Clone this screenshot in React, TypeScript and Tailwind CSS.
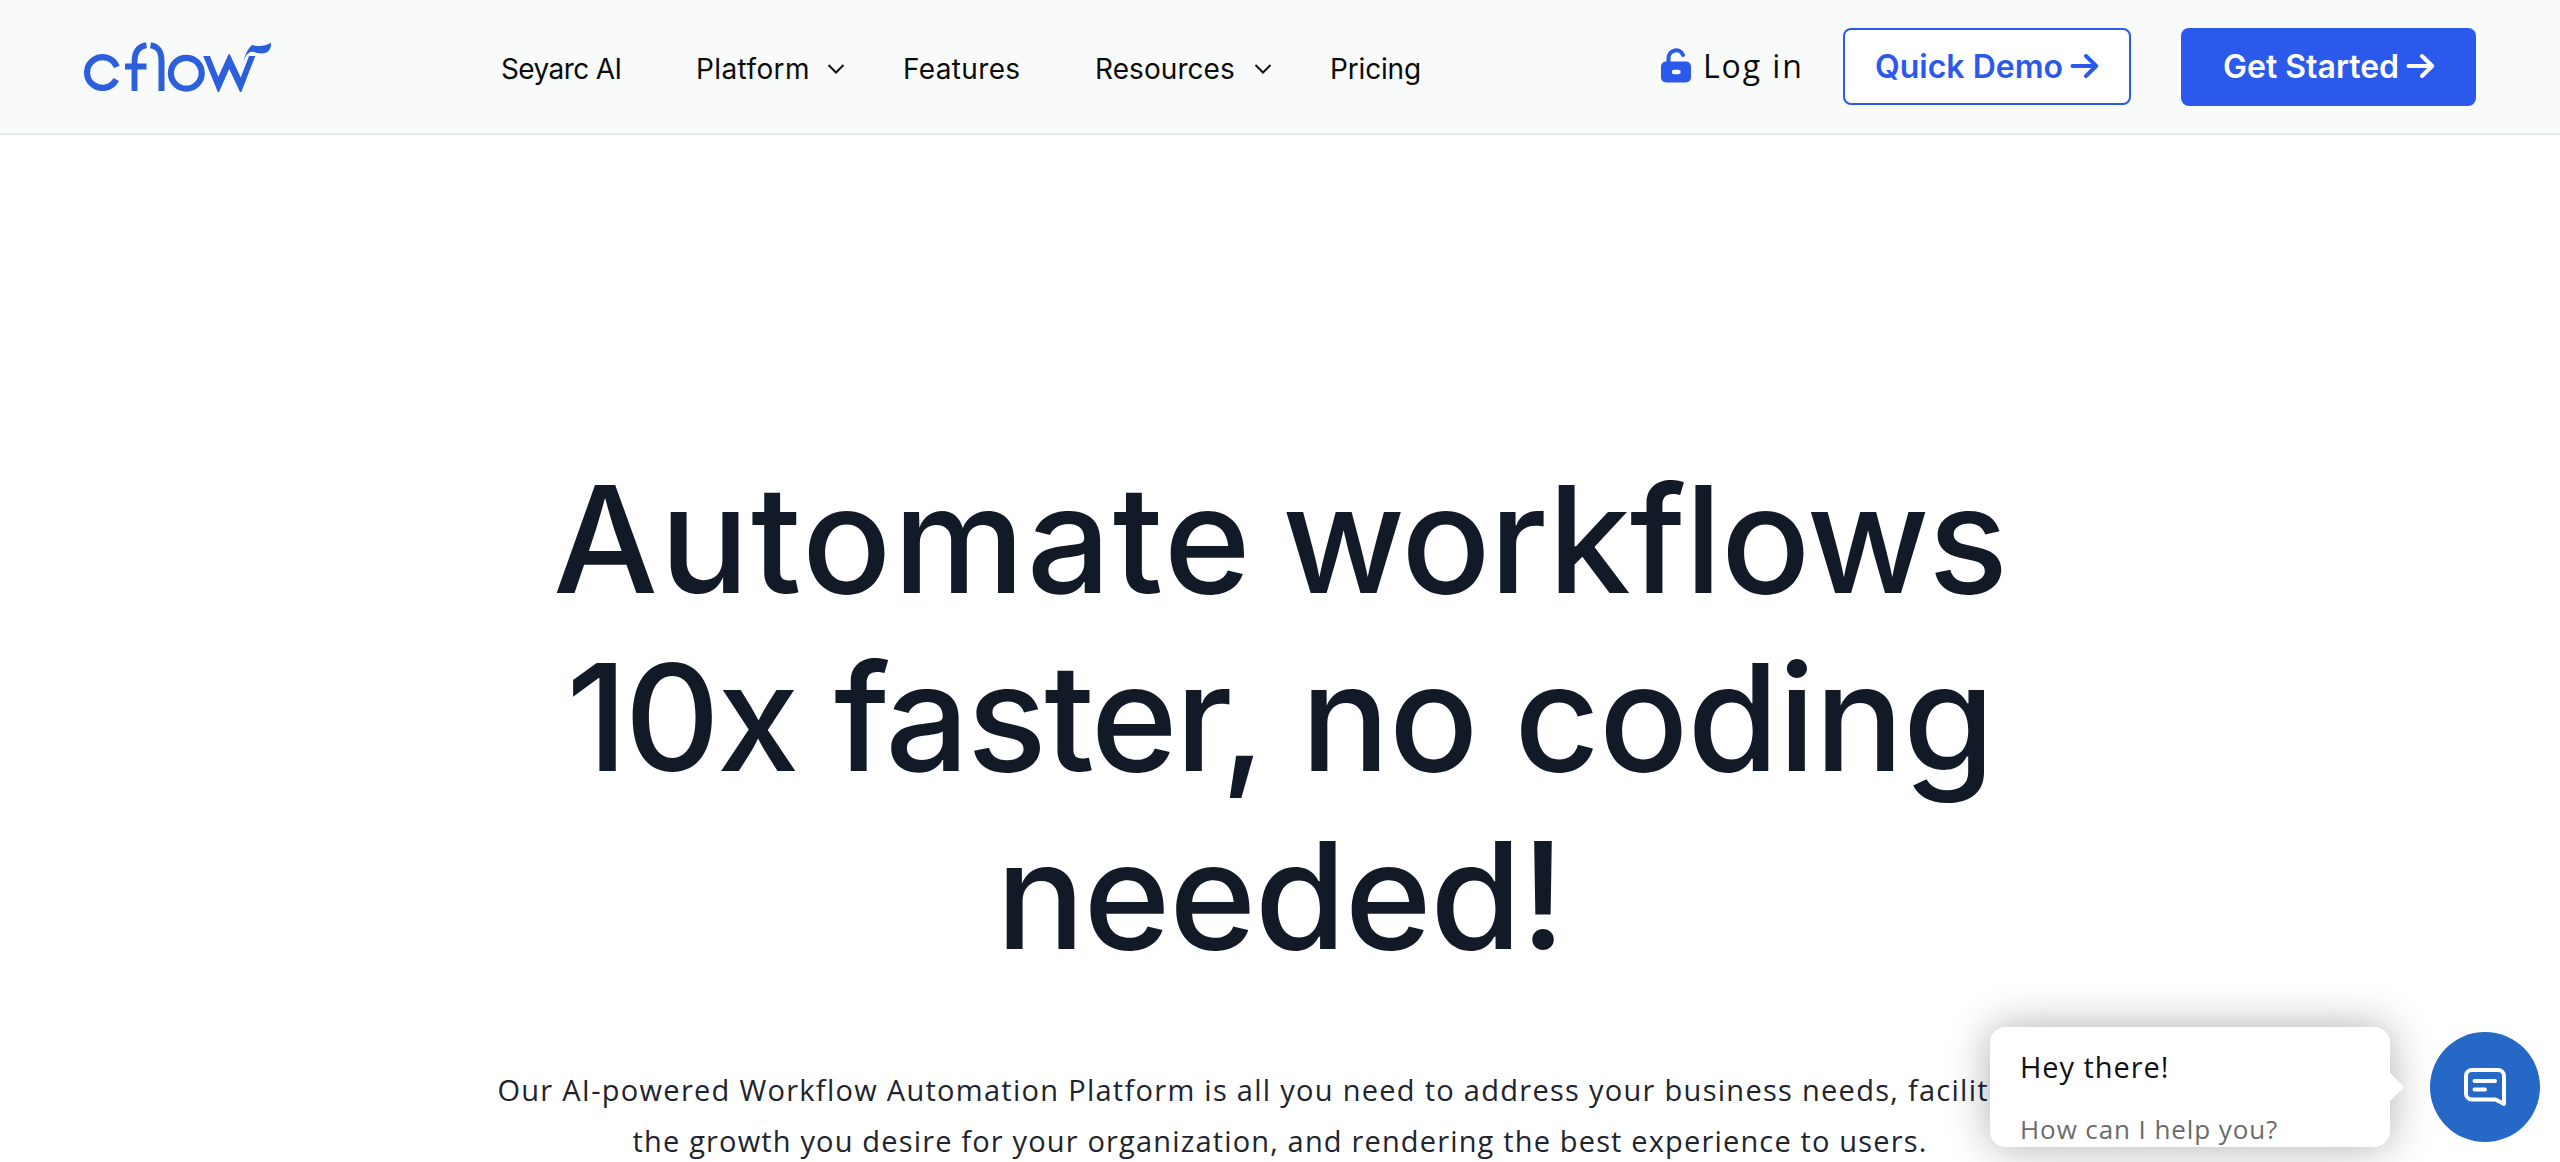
import type { ReactNode } from "react";

function Logo() {
  return (
    <svg width="190" height="52" viewBox="0 0 190 52" fill="none" stroke="#2b5fdc" strokeWidth="6.2" className="block shrink-0">
      <path d="M33.8 24.6A15.4 15.4 0 1 0 33.2 37.2" transform="translate(-1 .3)" />
      <path d="M50.5 49V19.5C50.5 9.5 54.5 4.500 62.500 3.200M41 24.500H62.500" strokeWidth="5.800" />
      <path d="M66.500 3.200C74.500 4.500 77.500 9.500 77.500 19.500V49" strokeWidth="6" />
      <circle cx="102.3" cy="31.2" r="15.400" />
      <path d="M119.200 14H126L134.300 34.800L144.600 12.300H145.800L156.700 35.500L165 14H171.300L157.300 50H156L145.200 27L135 50H133.800Z" fill="#2b5fdc" stroke="none" />
      <path d="M159.500 19.500C161 12.500 164 6.500 168 3C175 5 181 4 187 .8C187.500 7 184 11.500 178 11.500C172 11.300 169.500 8.700 166 10.300C163 11.500 161 15 159.500 19.500Z" fill="#2b5fdc" stroke="none" />
    </svg>
  );
}

function Chevron() {
  return (
    <svg width="18" height="12" viewBox="0 0 18 12" fill="none" stroke="#111" strokeWidth="2" className="mr-[58px] ml-auto">
      <path d="M1.500 2L9 9.500L16.500 2" />
    </svg>
  );
}

function Arrow() {
  return (
    <svg width="29" height="26" viewBox="0 0 29 26" fill="none" stroke="currentColor" strokeWidth="4" strokeLinecap="round" strokeLinejoin="round" className="shrink-0">
      <path d="M2.500 13H26M16 3L26.200 13L16 23" />
    </svg>
  );
}

function LockOpen() {
  return (
    <svg width="30" height="35" viewBox="0 0 30 35" fill="none" className="block shrink-0">
      <path d="M7.500 15V10.500C7.500 1.200 19 -.500 22 7" stroke="#2b59ec" strokeWidth="4" strokeLinecap="round" />
      <path fillRule="evenodd" d="M5 13.500H25A5 5 0 0 1 30 18.500V29.500A5 5 0 0 1 25 34.500H5A5 5 0 0 1 0 29.500V18.500A5 5 0 0 1 5 13.500ZM13 21.800A2.200 2.200 0 0 0 13 26.200H17.500A2.200 2.200 0 0 0 17.500 21.800Z" fill="#2b59ec" />
    </svg>
  );
}

function NavItem({ className, children, menu }: { className: string; children: ReactNode; menu?: boolean }) {
  return (
    <a className={`flex items-center whitespace-nowrap ${className}`}>
      {children}
      {menu && <Chevron />}
    </a>
  );
}

export default function App() {
  return (
    <div className="relative h-[1162px] w-[2560px] overflow-hidden bg-white font-['Open_Sans',sans-serif]">
      <header className="flex h-[135px] items-center border-b-2 border-[#e7e8ee] bg-[#f9fbfb] pr-[84px] pl-[84px]">
        <div className="mt-[3px] w-[417px]">
          <Logo />
        </div>
        <nav className="flex pt-[5px] font-['Inter',sans-serif] text-[28px] leading-[40px] text-[#0b0b0b]">
          <NavItem className="w-[195px] tracking-[-0.6px]">Seyarc AI</NavItem>
          <NavItem className="w-[207px] tracking-[0.4px]" menu>Platform</NavItem>
          <NavItem className="w-[192px] tracking-[0.35px]">Features</NavItem>
          <NavItem className="w-[235px] tracking-[0.07px]" menu>Resources</NavItem>
          <NavItem className="tracking-[-0.16px]">Pricing</NavItem>
        </nav>
        <div className="ml-auto flex h-[78px] items-start">
          <a className="flex h-[77px] w-[182px] items-center gap-[12px] text-[32px] whitespace-nowrap text-[#0b0b0b]">
            <div className="-mt-[2px]">
              <LockOpen />
            </div>
            <span className="tracking-[1.900px]">Log in</span>
          </a>
          <button className="flex h-[77px] w-[288px] items-center gap-[7px] rounded-lg border-2 border-[#2b59ec] bg-white pl-[30px] font-['Inter',sans-serif] text-[32px] font-semibold whitespace-nowrap text-[#2b59ec]">
            <span className="pt-[2px]">Quick Demo</span>
            <Arrow />
          </button>
          <button className="ml-[50px] flex h-[78px] w-[295px] items-center gap-[7px] rounded-lg bg-[#2b59ec] pb-px pl-[42px] font-['Inter',sans-serif] text-[32px] font-semibold whitespace-nowrap text-white">
            <span className="pt-[2px]">Get Started</span>
            <Arrow />
          </button>
        </div>
      </header>

      <main className="flex flex-col items-center text-center whitespace-nowrap">
        <h1 className="mt-[316px] flex flex-col items-center font-['Inter',sans-serif] text-[148px] leading-[178px] font-medium text-[#121a28]">
          <span className="[word-spacing:-10px]">
            <span className="tracking-[2px]">Automate</span> <span className="tracking-[-1.100px]">workflows</span>
          </span>
          <span className="[word-spacing:-2px]">
            <span className="tracking-[-3px]">10x</span> <span className="tracking-[-2.400px]">faster,</span>{" "}
            <span className="tracking-[-0.800px]">no coding</span>
          </span>
          <span className="tracking-[-1.400px]">needed!</span>
        </h1>
        <p className="mt-[79px] flex flex-col items-center text-[29px] leading-[51px] text-[#20242d]">
          <span className="tracking-[1.280px]">Our AI-powered Workflow Automation Platform is all you need to address your business needs, facilitating</span>
          <span className="tracking-[1.160px]">the growth you desire for your organization, and rendering the best experience to users.</span>
        </p>
      </main>

      <aside className="absolute top-[1027px] left-[1990px] flex items-start">
        <div className="relative h-[120px] w-[400px] rounded-[16px] bg-white shadow-[0_0_44px_rgba(0,0,0,0.32)]">
          <div className="absolute top-[50px] -right-[10px] size-[20px] rotate-45 bg-white" />
          <div className="relative h-[120px] overflow-hidden rounded-[16px] bg-white pt-[20px] pl-[30px] whitespace-nowrap">
            <p className="text-[29px] leading-[40px] tracking-[0.950px] text-[#111]">Hey there!</p>
            <p className="mt-[24px] text-[26px] leading-[36px] tracking-[0.910px] text-[#6b6b6b]">How can I help you?</p>
          </div>
        </div>
        <button className="mt-[5px] ml-[40px] flex size-[110px] items-center justify-center rounded-full bg-[#2568c6]">
          <svg width="42" height="38" viewBox="0 0 42 38" fill="none" stroke="#fff" strokeWidth="4" strokeLinecap="round" strokeLinejoin="round">
            <path d="M8 2H34A6 6 0 0 1 40 8V36L31.500 31.500H8A6 6 0 0 1 2 25.500V8A6 6 0 0 1 8 2Z" />
            <path d="M10.500 13H31M10.500 21.500H21" />
          </svg>
        </button>
      </aside>
    </div>
  );
}
